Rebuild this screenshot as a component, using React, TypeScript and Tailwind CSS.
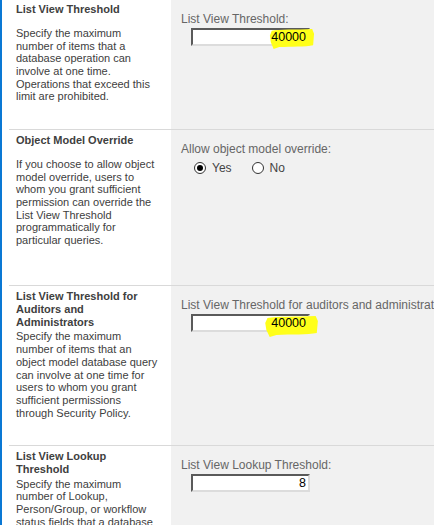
import type { ReactNode } from 'react';

const font = { fontFamily: '"Liberation Sans", Arial, sans-serif' };

function Highlight({ className }: { className: string }) {
  return (
    <svg className={`pointer-events-none absolute ${className}`} viewBox="0 0 50 22" preserveAspectRatio="none">
      <path
        d="M4 3 C12 1 30 2 47 1 L49 6 L48 18 C40 20 25 19 12 20 L6 22 L3 15 L2 8 Z"
        fill="#ffff1a"
      />
    </svg>
  );
}

function NumberBox({ value, highlight }: { value: string; highlight?: string }) {
  return (
    <div className="relative ml-[10px] mt-[2px] h-[18px] w-[119px] border-2 border-b-[#dcdcdc] border-l-[#5a5a5a] border-r-[#dcdcdc] border-t-[#5a5a5a] bg-white">
      {highlight && <Highlight className={highlight} />}
      <div className="relative pr-[2px] text-right text-[12.5px] leading-[14px] text-black">{value}</div>
    </div>
  );
}

function Radio({ checked, label }: { checked?: boolean; label: string }) {
  return (
    <span className="flex items-center gap-[6px]">
      <span className="flex h-[12px] w-[12px] items-center justify-center rounded-full border border-[#333] bg-white">
        {checked && <span className="h-[6px] w-[6px] rounded-full bg-black" />}
      </span>
      <span>{label}</span>
    </span>
  );
}

function Lines({ lines }: { lines: string[] }) {
  return (
    <>
      {lines.map((l) => (
        <div key={l} className="whitespace-nowrap">
          {l}
        </div>
      ))}
    </>
  );
}

function Section({
  height,
  title,
  tight,
  text,
  children,
  first,
}: {
  height: string;
  title: string[];
  tight?: boolean;
  text: string[];
  children: ReactNode;
  first?: boolean;
}) {
  return (
    <div className={`flex ${height}`}>
      <div className="w-[169px] shrink-0 bg-white">
        <div className={`ml-[7px] h-full pl-[7px] ${first ? 'pt-[3px]' : 'border-t border-[#d9d9d9] pt-[4px]'}`}>
          <div className="text-[11px] font-bold leading-[12.8px] text-[#404040]">
            <Lines lines={title} />
          </div>
          <div className={`${tight ? 'mt-[2px]' : 'mt-[11px]'} text-[11px] leading-[12.7px] text-[#404040]`}>
            <Lines lines={text} />
          </div>
        </div>
      </div>
      <div
        className={`min-w-0 flex-1 overflow-hidden bg-[#f1f1f1] pl-[10px] ${first ? 'pt-[12px]' : 'border-t border-[#d9d9d9] pt-[12px]'}`}
      >
        {children}
      </div>
    </div>
  );
}

export default function App() {
  return (
    <div className="h-[525px] w-[434px] overflow-hidden border-l-2 border-[#0a78d4] bg-white" style={font}>
      <Section
        first
        height="h-[129px]"
        title={['List View Threshold']}
        text={[
          'Specify the maximum',
          'number of items that a',
          'database operation can',
          'involve at one time.',
          'Operations that exceed this',
          'limit are prohibited.',
        ]}
      >
        <div className="whitespace-nowrap text-[12px] leading-[14px] text-[#666]">List View Threshold:</div>
        <NumberBox value="40000" highlight="left-[75px] top-[-2px] h-[21px] w-[47px]" />
      </Section>

      <Section
        height="h-[156px]"
        title={['Object Model Override']}
        text={[
          'If you choose to allow object',
          'model override, users to',
          'whom you grant sufficient',
          'permission can override the',
          'List View Threshold',
          'programmatically for',
          'particular queries.',
        ]}
      >
        <div className="whitespace-nowrap text-[12px] leading-[14px] text-[#666]">Allow object model override:</div>
        <div className="ml-[13px] mt-[5px] flex gap-[20px] text-[12px] leading-[14px] text-[#444]">
          <Radio checked label="Yes" />
          <Radio label="No" />
        </div>
      </Section>

      <Section
        height="h-[160px]"
        tight
        title={['List View Threshold for', 'Auditors and', 'Administrators']}
        text={[
          'Specify the maximum',
          'number of items that an',
          'object model database query',
          'can involve at one time for',
          'users to whom you grant',
          'sufficient permissions',
          'through Security Policy.',
        ]}
      >
        <div className="whitespace-nowrap text-[12px] leading-[14px] text-[#666]">
          List View Threshold for auditors and administrators:
        </div>
        <NumberBox value="40000" highlight="left-[70px] top-[-1px] h-[22px] w-[56px]" />
      </Section>

      <Section
        height="h-[80px]"
        tight
        title={['List View Lookup', 'Threshold']}
        text={[
          'Specify the maximum',
          'number of Lookup,',
          'Person/Group, or workflow',
          'status fields that a database',
          'query can involve at one time.',
        ]}
      >
        <div className="whitespace-nowrap text-[12px] leading-[14px] text-[#666]">List View Lookup Threshold:</div>
        <NumberBox value="8" />
      </Section>
    </div>
  );
}
